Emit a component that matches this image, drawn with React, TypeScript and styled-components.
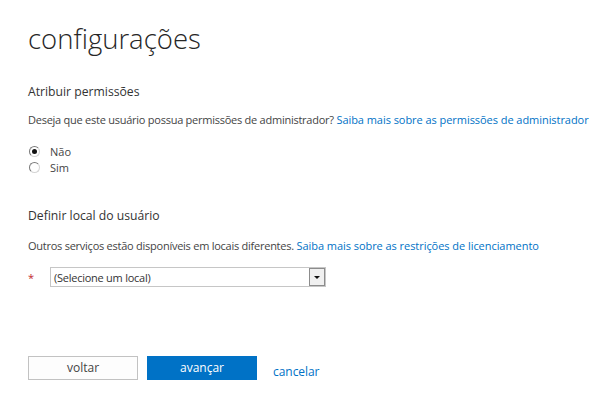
import React from "react";
import styled, { createGlobalStyle } from "styled-components";

const Global = createGlobalStyle`
  html, body { margin: 0; padding: 0; background: #ffffff; }
  body { font-family: "Open Sans", "Noto Sans", sans-serif; color: #333333; }
`;

const Page = styled.div`
  width: 600px;
  height: 412px;
  box-sizing: border-box;
  padding: 19px 0 0 28px;
  display: flex;
  flex-direction: column;
`;

const Title = styled.h1`
  margin: 0;
  font-size: 27.5px;
  font-weight: 300;
  line-height: 40px;
  color: #262626;
`;

const SectionTitle = styled.h2<{ $top: number }>`
  margin: ${(p) => p.$top}px 0 0 0;
  font-size: 12.2px;
  font-weight: 400;
  line-height: 20px;
  color: #333333;
`;

const Desc = styled.p<{ $top: number }>`
  margin: ${(p) => p.$top}px 0 0 0;
  font-size: 11px;
  line-height: 18px;
  color: #444444;
  white-space: nowrap;
  letter-spacing: -0.25px;
`;

const Link = styled.a`
  color: #0072c6;
  text-decoration: none;
  letter-spacing: -0.05px;
`;

const RadioGroup = styled.div`
  margin-top: 14px;
  display: flex;
  flex-direction: column;
`;

const RadioRow = styled.label`
  display: flex;
  align-items: center;
  height: 16px;
  font-size: 11px;
  color: #444444;
`;

const RadioCircle = styled.span<{ $checked?: boolean }>`
  width: 9px;
  height: 9px;
  margin: 0 10px 0 1px;
  border-radius: 50%;
  border: 1px solid;
  border-color: #7a7a7a #d4d4d4 #d4d4d4 #7a7a7a;
  background: #ffffff;
  display: flex;
  align-items: center;
  justify-content: center;
  &::after {
    content: "";
    display: ${(p) => (p.$checked ? "block" : "none")};
    width: 5px;
    height: 5px;
    border-radius: 50%;
    background: #111111;
  }
`;

const FieldRow = styled.div`
  margin-top: 12px;
  display: flex;
  align-items: center;
`;

const Required = styled.span`
  width: 22px;
  color: #c1272d;
  font-size: 11px;
`;

const Select = styled.div`
  width: 276px;
  height: 20px;
  box-sizing: border-box;
  border: 1px solid #c6c6c6;
  display: flex;
  align-items: center;
  justify-content: space-between;
  font-size: 11px;
  letter-spacing: -0.25px;
  color: #333333;
  padding-left: 3px;
`;

const DropButton = styled.span`
  width: 16px;
  height: 18px;
  box-sizing: border-box;
  border: 1px solid #8c8c8c;
  background: #f0f0f0;
  display: flex;
  align-items: center;
  justify-content: center;
  &::after {
    content: "";
    margin-top: 1px;
    border-left: 3px solid transparent;
    border-right: 3px solid transparent;
    border-top: 3px solid #111111;
  }
`;

const Actions = styled.div`
  margin-top: 69px;
  display: flex;
  align-items: center;
`;

const Button = styled.button<{ $primary?: boolean }>`
  width: 110px;
  height: 24px;
  margin-right: 9px;
  box-sizing: border-box;
  font-family: inherit;
  font-size: 12px;
  line-height: 20px;
  padding: 0;
  border: 1px solid ${(p) => (p.$primary ? "#0072c6" : "#c2c2c2")};
  background: ${(p) => (p.$primary ? "#0072c6" : "#fdfdfd")};
  color: ${(p) => (p.$primary ? "#ffffff" : "#444444")};
`;

const CancelLink = styled(Link)`
  margin-left: 7px;
  margin-top: 6px;
  font-size: 12px;
`;

export default function App() {
  return (
    <>
      <Global />
      <Page>
        <Title>configurações</Title>
        <SectionTitle $top={23}>Atribuir permissões</SectionTitle>
        <Desc $top={9}>
          Deseja que este usuário possua permissões de administrador?{" "}
          <Link href="#">Saiba mais sobre as permissões de administrador</Link>
        </Desc>
        <RadioGroup>
          <RadioRow>
            <RadioCircle $checked />
            Não
          </RadioRow>
          <RadioRow>
            <RadioCircle />
            Sim
          </RadioRow>
        </RadioGroup>
        <SectionTitle $top={31}>Definir local do usuário</SectionTitle>
        <Desc $top={11}>
          Outros serviços estão disponíveis em locais diferentes.{" "}
          <Link href="#">Saiba mais sobre as restrições de licenciamento</Link>
        </Desc>
        <FieldRow>
          <Required>*</Required>
          <Select>
            (Selecione um local)
            <DropButton />
          </Select>
        </FieldRow>
        <Actions>
          <Button>voltar</Button>
          <Button $primary>avançar</Button>
          <CancelLink href="#">cancelar</CancelLink>
        </Actions>
      </Page>
    </>
  );
}
